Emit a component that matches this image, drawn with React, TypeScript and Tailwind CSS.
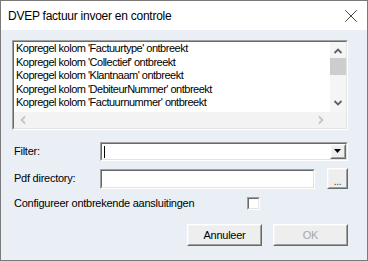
import { X } from "lucide-react"

const font = { fontFamily: '"Liberation Sans", Arial, sans-serif' }

// classic sunken frame (list, inputs, checkbox)
const Sunken = ({ className, children }: { className: string; children?: React.ReactNode }) => (
  <div className={"border border-t-[#a0a0a0] border-l-[#a0a0a0] border-b-white border-r-white " + className}>
    <div className="h-full w-full border border-t-[#696969] border-l-[#696969] border-b-[#e3e3e3] border-r-[#e3e3e3] bg-white">
      {children}
    </div>
  </div>
)

// classic raised button frame
const Raised = ({ className, children }: { className: string; children?: React.ReactNode }) => (
  <div className={"border border-t-white border-l-white border-b-[#696969] border-r-[#696969] " + className}>
    <div className="flex h-full w-full items-center justify-center border border-t-[#f4f4f4] border-l-[#f4f4f4] border-b-[#a0a0a0] border-r-[#a0a0a0] bg-[#eeeeee]">
      {children}
    </div>
  </div>
)

const rows = [
  "Kopregel kolom 'Factuurtype' ontbreekt",
  "Kopregel kolom 'Collectief' ontbreekt",
  "Kopregel kolom 'Klantnaam' ontbreekt",
  "Kopregel kolom 'DebiteurNummer' ontbreekt",
  "Kopregel kolom 'Factuurnummer' ontbreekt",
]

export default function App() {
  return (
    <div className="flex h-[261px] w-[368px] flex-col border border-[#7a7a7a] bg-white text-[11px] tracking-[-0.25px] text-black" style={font}>
      {/* title bar */}
      <div className="flex h-[29px] shrink-0 items-center justify-between bg-white pl-[7px] pr-[5px]">
        <span className="text-[12px]">DVEP factuur invoer en controle</span>
        <X size={22} strokeWidth={0.8} />
      </div>

      {/* client */}
      <div className="flex-1 bg-[#eaeff5]">
        {/* list */}
        <Sunken className="ml-[11px] mt-[10px] h-[90px] w-[336px]">
          <div className="flex h-full flex-col">
            <div className="flex h-[70px]">
              <div className="flex-1 pl-[2px] leading-[13.5px] tracking-[-0.5px]">
                {rows.map((r) => (
                  <div key={r} className="whitespace-nowrap">{r}</div>
                ))}
              </div>
              <div className="flex w-[16px] flex-col items-center bg-[#f5f5f5]">
                <svg width="16" height="14" viewBox="0 0 16 14" className="mt-[2px]">
                  <path d="M4.5 9 L8 5.5 L11.5 9" fill="none" stroke="#606060" strokeWidth="1.8" />
                </svg>
                <div className="h-[17px] w-[16px] bg-[#cdcdcd]" />
                <div className="flex-1" />
                <svg width="16" height="14" viewBox="0 0 16 14" className="mb-[2px]">
                  <path d="M4.5 5 L8 8.5 L11.5 5" fill="none" stroke="#606060" strokeWidth="1.8" />
                </svg>
              </div>
            </div>
            <div className="flex h-[16px] items-center justify-between bg-[#f3f3f3] pl-[4px] pr-[20px]">
              <svg width="10" height="12" viewBox="0 0 10 12">
                <path d="M7 2.5 L3.5 6 L7 9.5" fill="none" stroke="#c4c4c4" strokeWidth="1.8" />
              </svg>
              <svg width="10" height="12" viewBox="0 0 10 12">
                <path d="M3 2.5 L6.5 6 L3 9.5" fill="none" stroke="#c4c4c4" strokeWidth="1.8" />
              </svg>
            </div>
          </div>
        </Sunken>

        {/* filter */}
        <div className="mt-[12px] flex h-[19px] items-center">
          <div className="w-[99px] pl-[13px]">Filter:</div>
          <Sunken className="h-[19px] w-[248px]">
            <div className="flex h-full items-center">
              <div className="ml-[2px] h-[12px] w-px bg-black" />
              <div className="flex-1" />
              <Raised className="h-[15px] w-[16px]">
                <svg width="8" height="5" viewBox="0 0 8 5">
                  <path d="M0 0 H7 L3.5 4 Z" fill="#000" />
                </svg>
              </Raised>
            </div>
          </Sunken>
        </div>

        {/* pdf directory */}
        <div className="mt-[7px] flex h-[21px] items-center">
          <div className="w-[99px] pl-[13px]">Pdf directory:</div>
          <Sunken className="h-[20px] w-[215px]" />
          <Raised className="ml-[12px] h-[21px] w-[21px]">
            <span className="mt-[6px] text-[10px] leading-none text-[#333]">...</span>
          </Raised>
        </div>

        {/* checkbox */}
        <div className="mt-[8px] flex h-[13px] items-center">
          <div className="w-[246px] pl-[13px]">Configureer ontbrekende aansluitingen</div>
          <Sunken className="h-[13px] w-[13px]" />
        </div>

        {/* buttons */}
        <div className="mt-[14px] flex h-[22px] pl-[186px]">
          <Raised className="h-[22px] w-[75px]">
            <span>Annuleer</span>
          </Raised>
          <Raised className="ml-[11px] h-[22px] w-[75px]">
            <span className="text-[#a8a8a8]">OK</span>
          </Raised>
        </div>
      </div>
    </div>
  )
}
